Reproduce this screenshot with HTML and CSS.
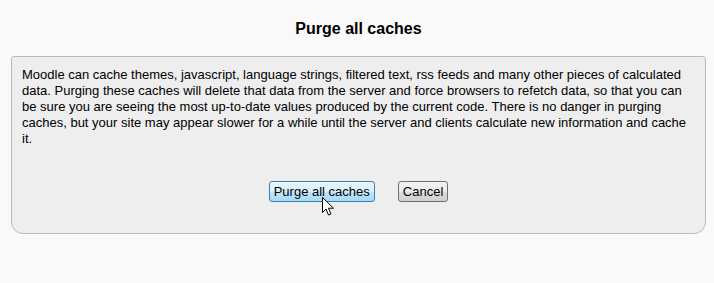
FILE: index.html
```html
<!DOCTYPE html>
<html lang="en">
<head>
    <meta charset="UTF-8">
    <title>Purge all caches</title>
    <link rel="stylesheet" href="styles.css">
</head>
<body>
    <div class="page">
        <h2 class="main-title">Purge all caches</h2>

        <div class="box generalbox">
            <p class="message">Moodle can cache themes, javascript, language strings, filtered text, rss feeds and many other pieces of calculated data. Purging these caches will delete that data from the server and force browsers to refetch data, so that you can be sure you are seeing the most up-to-date values produced by the current code. There is no danger in purging caches, but your site may appear slower for a while until the server and clients calculate new information and cache it.</p>

            <div class="buttons">
                <button class="btn btn-hover" type="submit">Purge all caches</button>
                <button class="btn" type="button">Cancel</button>
                <svg class="cursor" width="13" height="20" viewBox="0 0 13 20">
                    <path d="M0.5 0.5 L0.5 15.5 L4 12 L6.5 18 L9 17 L6.5 11.2 L11.5 11.2 Z" fill="#fff" stroke="#000" stroke-width="1" stroke-linejoin="miter"/>
                </svg>
            </div>
        </div>
    </div>
</body>
</html>
```

FILE: styles.css
```css
body {
    margin: 0;
    background: #f9f9f9;
    font-family: 'Liberation Sans', Arial, sans-serif;
    color: #000;
}

.page {
    padding: 0 8px 0 11px;
}

.main-title {
    margin: 0;
    padding: 20px 0 0 0;
    height: 36px;
    text-align: center;
    font-size: 16px;
    font-weight: bold;
}

.box {
    width: 673px;
    margin: 0;
    padding: 10px 10px 31px 10px;
    background: #eee;
    border: 1px solid #bbb;
    border-radius: 3px 3px 12px 12px;
}

.message {
    margin: 0 0 34px 0;
    font-size: 13px;
    line-height: 16px;
}

.buttons {
    position: relative;
    display: flex;
    justify-content: center;
    gap: 23px;
}

.btn {
    height: 21px;
    padding: 0 4px;
    font-family: 'Liberation Sans', Arial, sans-serif;
    font-size: 13px;
    color: #000;
    border: 1px solid #707070;
    border-radius: 3px;
    background: linear-gradient(#f2f2f2 0%, #ebebeb 50%, #dddddd 51%, #cfcfcf 100%);
}

.btn-hover {
    border-color: #3c7fb1;
    background: linear-gradient(#eaf6fd 0%, #d9f0fc 50%, #bee6fd 51%, #a7d9f5 100%);
}

.cursor {
    position: absolute;
    left: 300px;
    top: 16px;
}
```
